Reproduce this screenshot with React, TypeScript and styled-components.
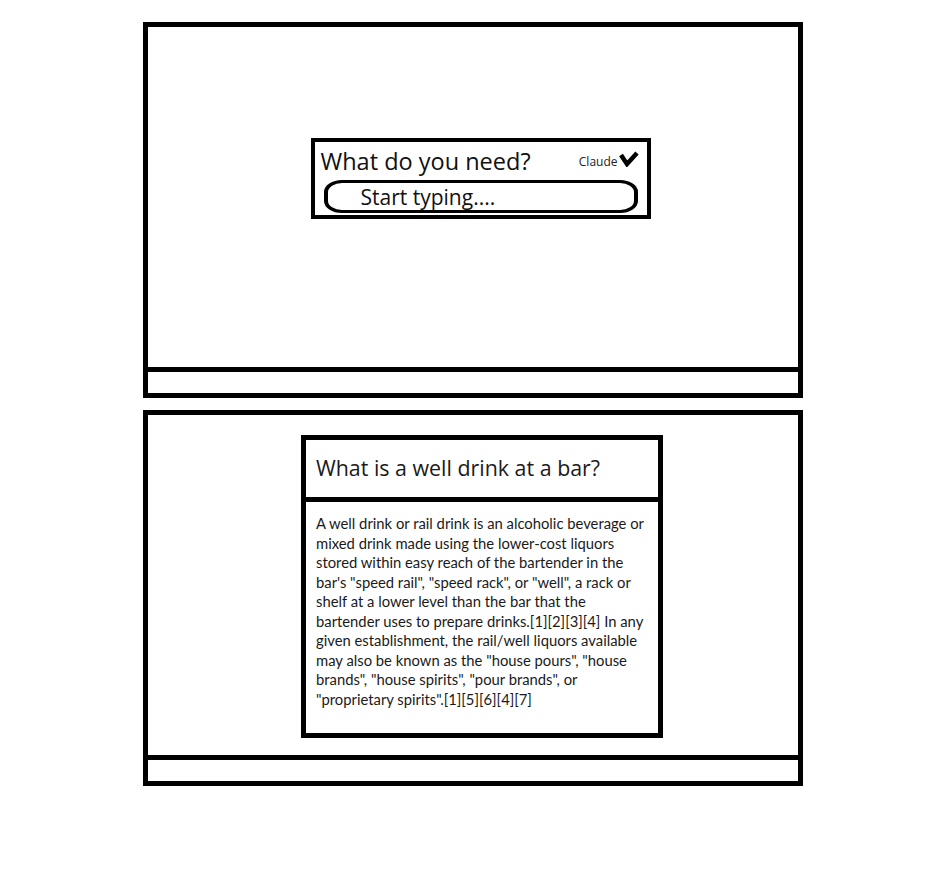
import React from 'react';
import styled, { createGlobalStyle } from 'styled-components';

const GlobalStyle = createGlobalStyle`
  html, body {
    margin: 0;
    padding: 0;
    background: #ffffff;
  }
  body {
    font-family: 'Open Sans', 'Noto Sans', sans-serif;
    color: #1a1a1a;
  }
`;

const ANSWER =
  'A well drink or rail drink is an alcoholic beverage or mixed drink made using the lower-cost liquors stored within easy reach of the bartender in the bar\'s "speed rail", "speed rack", or "well", a rack or shelf at a lower level than the bar that the bartender uses to prepare drinks.[1][2][3][4] In any given establishment, the rail/well liquors available may also be known as the "house pours", "house brands", "house spirits", "pour brands", or "proprietary spirits".[1][5][6][4][7]';

function CheckIcon() {
  return (
    <svg width="20" height="16" viewBox="0 0 20 16">
      <path d="M2 4 L8 13 L18 2" fill="none" stroke="#000" strokeWidth="4.5" strokeLinejoin="miter" />
    </svg>
  );
}

function Screen({ children, topPad, leftPad }: { children: React.ReactNode; topPad: number; leftPad: number }) {
  return (
    <St.Frame>
      <St.Main $topPad={topPad} $leftPad={leftPad}>
        {children}
      </St.Main>
      <St.Footer />
    </St.Frame>
  );
}

export default function App() {
  return (
    <>
      <GlobalStyle />
      <St.Page>
        <Screen topPad={111} leftPad={15}>
          <St.PromptBox>
            <St.PromptHeader>
              <St.PromptTitle>What do you need?</St.PromptTitle>
              <St.ModelPicker>
                <St.ModelName>Claude</St.ModelName>
                <CheckIcon />
              </St.ModelPicker>
            </St.PromptHeader>
            <St.InputPill>Start typing....</St.InputPill>
          </St.PromptBox>
        </Screen>

        <Screen topPad={20} leftPad={18}>
          <St.AnswerCard>
            <St.AnswerHeader>What is a well drink at a bar?</St.AnswerHeader>
            <St.AnswerBody>{ANSWER}</St.AnswerBody>
          </St.AnswerCard>
        </Screen>
      </St.Page>
    </>
  );
}

const St = {
  Page: styled.div`
    display: flex;
    flex-direction: column;
    gap: 12px;
    width: 660px;
    margin: 22px 0 0 143px;
  `,
  Frame: styled.section`
    display: flex;
    flex-direction: column;
    border: 5px solid #000;
    background: #fff;
  `,
  Main: styled.div<{ $topPad: number; $leftPad: number }>`
    display: flex;
    justify-content: center;
    align-items: flex-start;
    height: 340px;
    box-sizing: border-box;
    padding: ${p => p.$topPad}px 0 0 ${p => p.$leftPad}px;
  `,
  Footer: styled.div`
    height: 21px;
    border-top: 5px solid #000;
  `,
  PromptBox: styled.div`
    display: flex;
    flex-direction: column;
    width: 340px;
    height: 81px;
    box-sizing: border-box;
    border: 4px solid #000;
  `,
  PromptHeader: styled.div`
    display: flex;
    align-items: center;
    justify-content: space-between;
    height: 38px;
    padding: 0 8px 0 6px;
  `,
  PromptTitle: styled.span`
    font-size: 23.5px;
    color: #111;
  `,
  ModelPicker: styled.div`
    display: flex;
    align-items: center;
    gap: 1px;
    padding-bottom: 4px;
  `,
  ModelName: styled.span`
    font-size: 12px;
    color: #222;
    padding-top: 4px;
  `,
  InputPill: styled.div`
    display: flex;
    align-items: center;
    height: 33px;
    margin: 0 9px;
    box-sizing: border-box;
    padding-left: 33px;
    border: 3px solid #000;
    border-width: 3px 4px;
    border-radius: 18px / 12px;
    font-size: 21px;
    color: #111;
  `,
  AnswerCard: styled.div`
    display: flex;
    flex-direction: column;
    width: 362px;
    height: 303px;
    box-sizing: border-box;
    border: 5px solid #000;
  `,
  AnswerHeader: styled.div`
    display: flex;
    align-items: center;
    height: 54px;
    padding: 0 0 3px 10px;
    border-bottom: 5px solid #000;
    font-size: 21.4px;
    color: #1a1a1a;
  `,
  AnswerBody: styled.p`
    margin: 0;
    padding: 12px 7px 0 10px;
    font-family: Lato, 'Open Sans', sans-serif;
    font-size: 14.8px;
    line-height: 19.5px;
    color: #1a1a1a;
  `,
};
